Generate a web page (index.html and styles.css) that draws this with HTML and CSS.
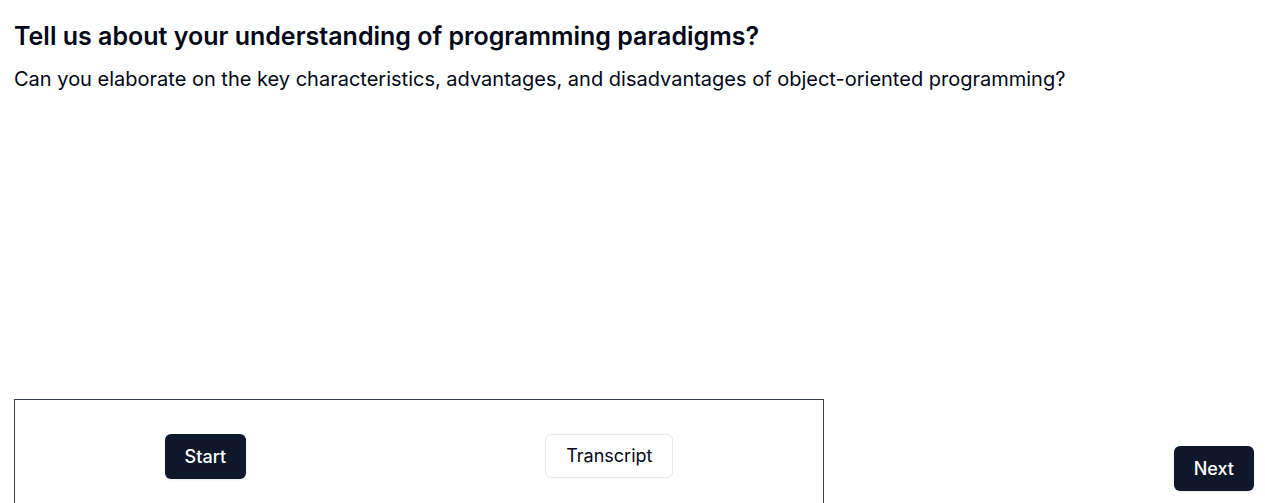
FILE: index.html
```html
<!DOCTYPE html>
<html>
<head>
<meta charset="utf-8">
<link rel="stylesheet" href="styles.css">
</head>
<body>
<main class="page">
  <h1 class="title">Tell us about your understanding of programming paradigms?</h1>
  <p class="question">Can you elaborate on the key characteristics, advantages, and disadvantages of object-oriented programming?</p>
  <div class="bottom">
    <div class="recorder">
      <button class="btn btn-dark">Start</button>
      <button class="btn btn-light">Transcript</button>
    </div>
    <button class="btn btn-dark next">Next</button>
  </div>
</main>
</body>
</html>
```
FILE: styles.css
```css
html, body {
  margin: 0;
  padding: 0;
  background: #ffffff;
}
body {
  font-family: Inter, "Noto Sans", sans-serif;
  color: #020817;
  overflow: hidden;
}
.page {
  padding: 20px 11px 0 14px;
  display: flex;
  flex-direction: column;
}
.title {
  margin: 0;
  font-size: 25px;
  line-height: 32px;
  font-weight: 600;
}
.question {
  margin: 13px 0 0 0;
  font-size: 20px;
  line-height: 28px;
  font-weight: 400;
}
.bottom {
  margin-top: 306px;
  display: flex;
  justify-content: space-between;
  align-items: flex-start;
}
.recorder {
  width: 810px;
  height: 150px;
  border: 1px solid #374151;
  display: flex;
  justify-content: space-around;
  align-items: flex-start;
  padding-top: 34px;
  box-sizing: border-box;
}
.btn {
  font-family: Inter, "Noto Sans", sans-serif;
  font-size: 18px;
  line-height: 24px;
  height: 45px;
  padding: 0 20px;
  border-radius: 6px;
  cursor: pointer;
  font-weight: 500;
}
.btn-dark {
  background: #0f172a;
  color: #ffffff;
  border: none;
  box-shadow: 0 1px 2px rgba(0,0,0,0.08);
}
.btn-light {
  background: #ffffff;
  color: #020817;
  border: 1px solid #e2e8f0;
  height: 44px;
  font-weight: 400;
}
.next {
  margin-top: 47px;
}
```
